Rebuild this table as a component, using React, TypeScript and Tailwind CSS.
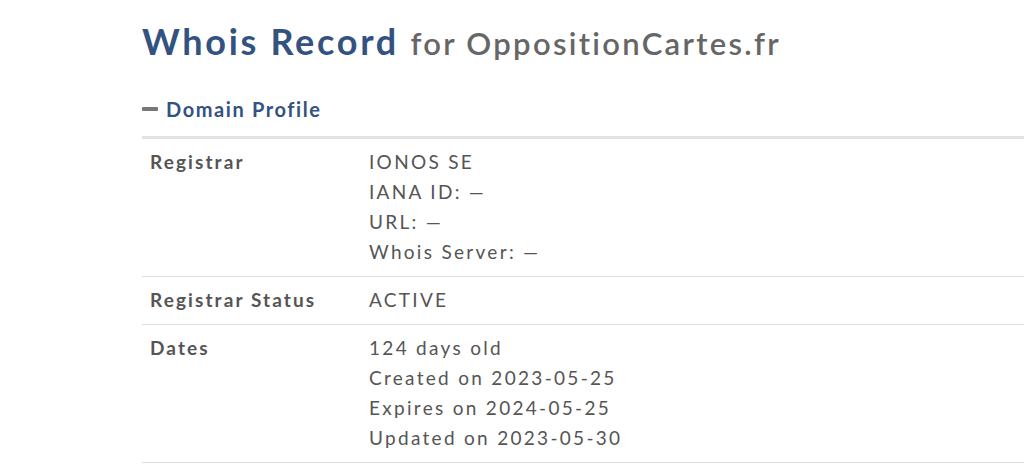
const rows: { label: string; values: string[] }[] = [
  { label: "Registrar", values: ["IONOS SE", "IANA ID: —", "URL: —", "Whois Server: —"] },
  { label: "Registrar Status", values: ["ACTIVE"] },
  {
    label: "Dates",
    values: ["124 days old", "Created on 2023-05-25", "Expires on 2024-05-25", "Updated on 2023-05-30"],
  },
];

export default function App() {
  return (
    <div className="min-h-[466px] bg-white pl-[142px] pt-[17px] font-['Lato',sans-serif]">
      <h1 className="text-[36px] leading-[48px] font-bold tracking-[2.7px] text-[#34527f]">
        Whois Record{" "}
        <span className="text-[31px] font-semibold tracking-[2.3px] text-[#666666]">for OppositionCartes.fr</span>
      </h1>

      <div className="mt-[29px] flex items-center gap-[8px]">
        <span className="block h-[4px] w-[16px] rounded-[1px] bg-[#777777]" />
        <span className="text-[20px] leading-[26px] font-bold tracking-[1.6px] text-[#34527f]">Domain Profile</span>
      </div>

      <div className="mt-[14px] border-t-[3px] border-[#e2e2e2]">
        {rows.map((row) => (
          <div key={row.label} className="flex border-b border-[#dedede] pt-[8px] pb-[9px] text-[19px] leading-[30px] text-[#555555]">
            <div className="w-[219px] shrink-0 pl-[8px] font-bold tracking-[2.1px]">{row.label}</div>
            <div className="pl-[8px] tracking-[2.3px]">
              {row.values.map((v) => (
                <div key={v}>{v}</div>
              ))}
            </div>
          </div>
        ))}
      </div>
    </div>
  );
}
